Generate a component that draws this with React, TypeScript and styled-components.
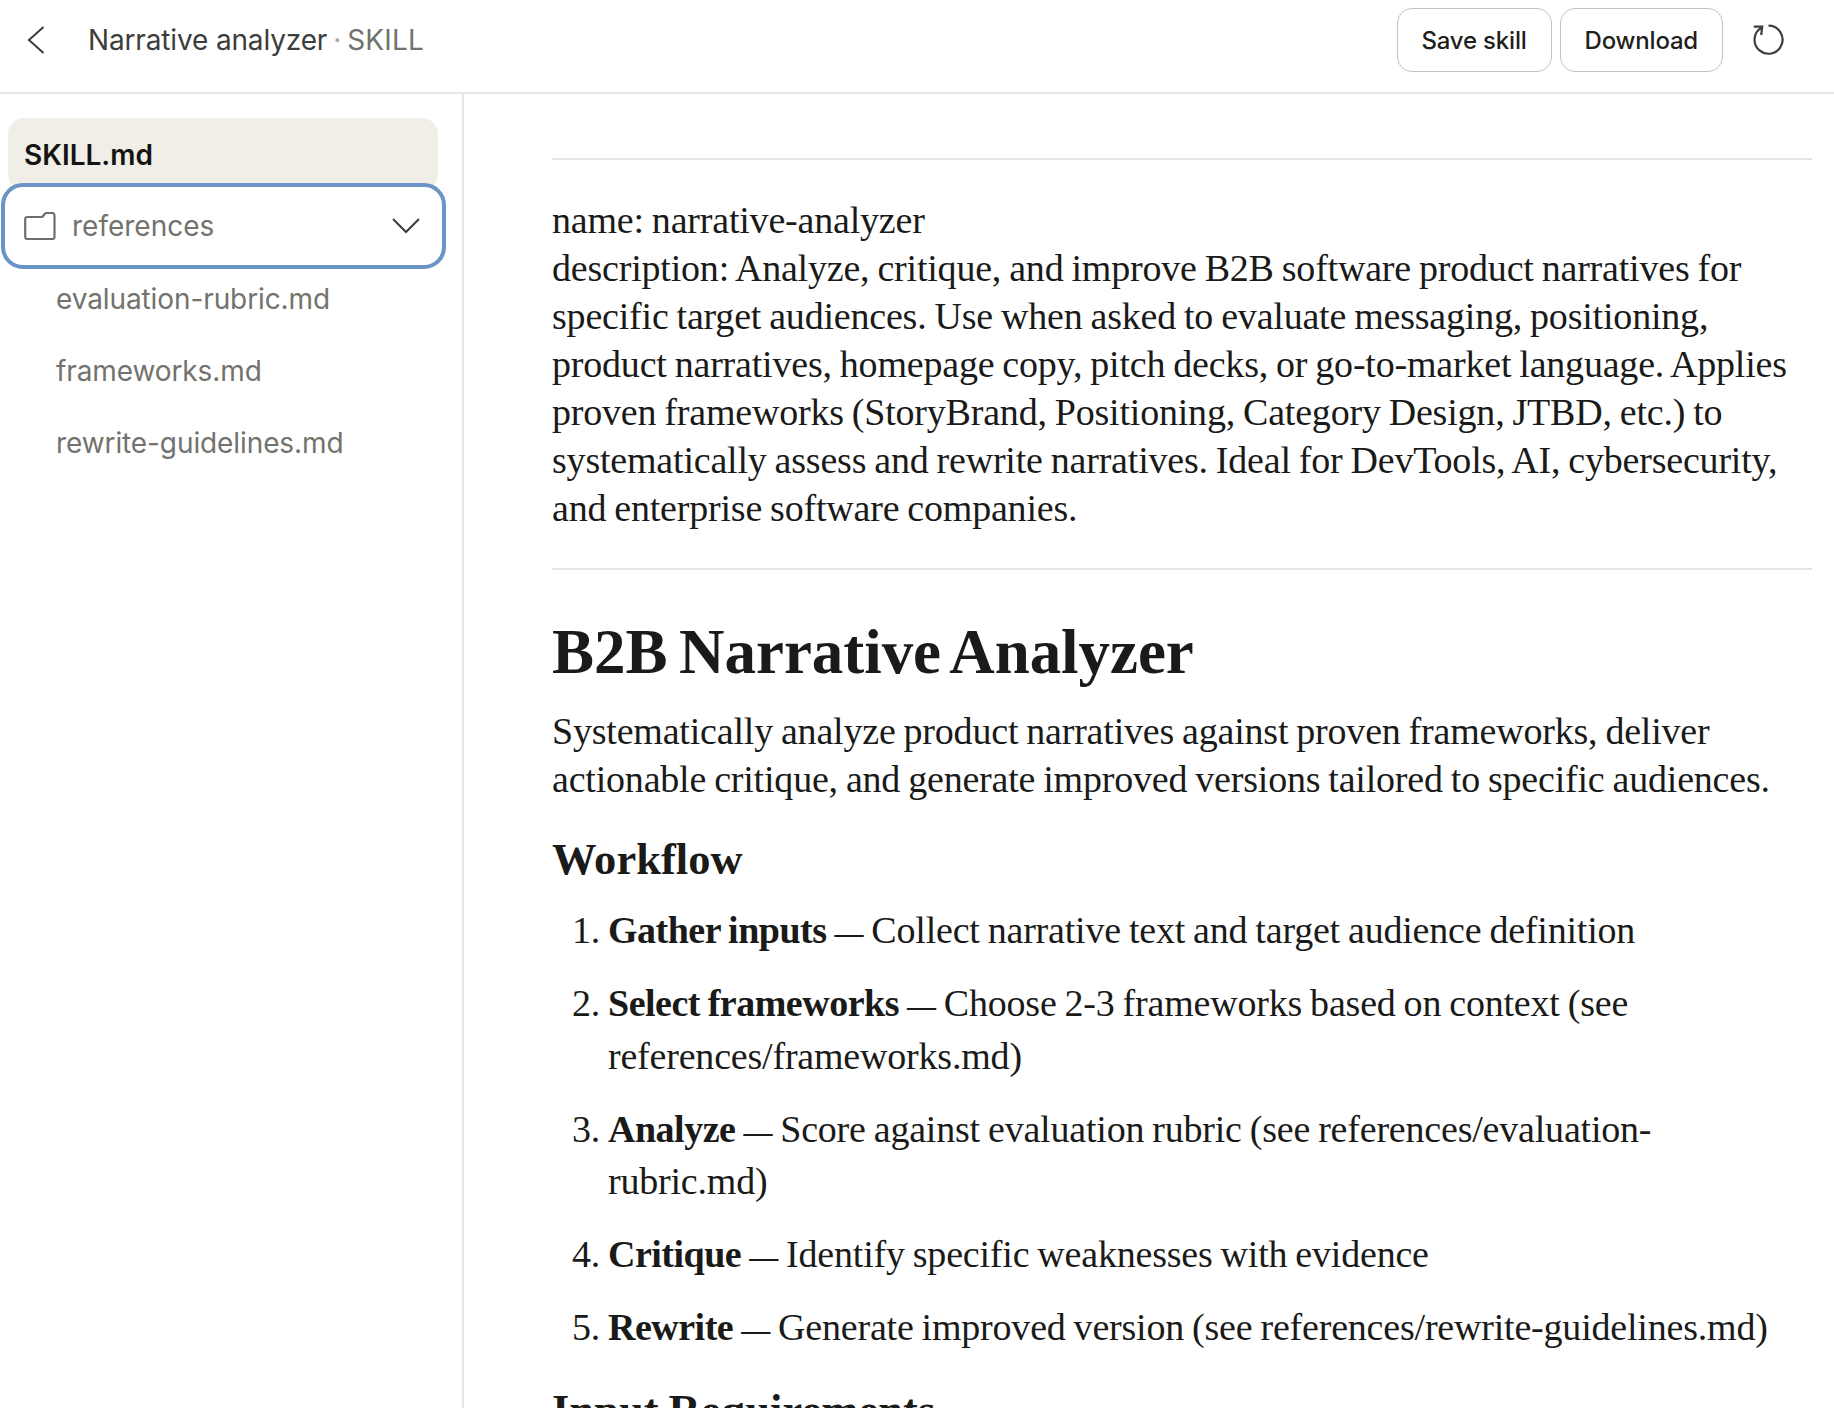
import React from "react";
import styled, { createGlobalStyle } from "styled-components";

const Global = createGlobalStyle`
  html, body { margin: 0; padding: 0; height: 1408px; overflow: hidden; background: #fff; }
  * { box-sizing: border-box; }
`;
const Page = styled.div`
  width: 1834px; height: 1408px; display: flex; flex-direction: column; overflow: hidden;
  font-family: Inter, "Liberation Sans", sans-serif; background: #fff;
`;
const Header = styled.header`
  height: 94px; flex: none; display: flex; align-items: center; padding: 0 49px 12px 26px;
  border-bottom: 2px solid #e5e5e3;
`;
const IconBack = styled.svg`width: 20px; height: 30px; flex: none; margin-right: 42px;`;
const Title = styled.div`font-size: 28px; color: #3d3d3a; letter-spacing: -0.15px; flex: 1;`;
const Dot = styled.span`color: #a8a8a3; margin: 0 6px;`;
const Muted = styled.span`color: #73726c; letter-spacing: 0.2px;`;
const HeaderButton = styled.button`
  height: 64px; border: 1px solid #c4c4c0; border-radius: 15px; background: #fff; color: #1f1f1d;
  font: 500 24px Inter, sans-serif; padding: 0 24px; margin-right: 8px; letter-spacing: -0.2px;
`;
const Reload = styled.svg`width: 32px; height: 32px; margin-left: 22px; flex: none;`;
const Body = styled.div`flex: 1; display: flex; min-height: 0;`;
const Sidebar = styled.aside`
  width: 464px; flex: none; border-right: 2px solid #e5e5e3; padding: 24px 0 0 8px;
`;
const ActiveFile = styled.div`
  width: 430px; height: 72px; border-radius: 16px; background: #f0eee7; color: #141413;
  font-size: 28px; font-weight: 600; padding: 20px 16px 0;
`;
const Folder = styled.div`
  position: relative; z-index: 1; margin: -7px 0 -6px -7px; width: 445px; height: 86px;
  border: 4px solid #6a94c6; border-radius: 22px; background: #fff; display: flex; align-items: center;
  padding: 0 22px 0 19px; color: #73726c; font-size: 28px;
`;
const FolderIcon = styled.svg`width: 32px; height: 28px; margin-right: 16px; flex: none;`;
const FolderLabel = styled.span`flex: 1;`;
const Chevron = styled.svg`width: 28px; height: 16px; flex: none;`;
const FileItem = styled.div`
  height: 72px; display: flex; align-items: center; padding-left: 48px; color: #73726c; font-size: 28px;
  letter-spacing: -0.1px;
`;
const Main = styled.main`
  flex: 1; padding: 64px 22px 0 88px; color: #1a1a19;
  font-family: "Liberation Serif", serif; font-size: 38px; line-height: 48px; min-width: 0;
  word-spacing: -1.3px; letter-spacing: -0.2px;
`;
const Rule = styled.hr`border: 0; border-top: 2px solid #e5e5e3; margin: 0;`;
const Para = styled.p<{ $pad?: string }>`margin: 0; padding: ${p => p.$pad || "0"};`;
const H1 = styled.h1`font-size: 63px; line-height: 72px; font-weight: 700; margin: 46px 0 19px; letter-spacing: -0.05px; word-spacing: -4px;`;
const H2 = styled.h2`font-size: 44.5px; line-height: 52px; font-weight: 700; margin: 30px 0 19px; letter-spacing: 0.05px;`;
const List = styled.ol`margin: 0; padding: 0 24px 0 56px;`;
const Item = styled.li`margin: 0 0 20.5px; line-height: 52.5px;`;
const Strong = styled.strong`letter-spacing: -0.5px;`;
const Dash = styled.span`font-size: 29px; font-weight: 700; line-height: 0;`;

const items: [string, string][] = [
  ["Gather inputs", "Collect narrative text and target audience definition"],
  ["Select frameworks", "Choose 2-3 frameworks based on context (see references/frameworks.md)"],
  ["Analyze", "Score against evaluation rubric (see references/evaluation-rubric.md)"],
  ["Critique", "Identify specific weaknesses with evidence"],
  ["Rewrite", "Generate improved version (see references/rewrite-guidelines.md)"],
];

export default function App() {
  return (
    <Page>
      <Global />
      <Header>
        <IconBack viewBox="0 0 20 30" fill="none" stroke="#3d3d3a" strokeWidth="2"><path d="M17.5 2 3 15l14.5 13" /></IconBack>
        <Title>Narrative analyzer<Dot>·</Dot><Muted>SKILL</Muted></Title>
        <HeaderButton>Save skill</HeaderButton>
        <HeaderButton>Download</HeaderButton>
        <Reload viewBox="0 0 32 32" fill="none" stroke="#3d3d3a" strokeWidth="2.2"><path d="M15.5 1.700A14 14 0 1 1 8.500 3.600M.8 2.700h8.400l-1 8.300" /></Reload>
      </Header>
      <Body>
        <Sidebar>
          <ActiveFile>SKILL.md</ActiveFile>
          <Folder>
            <FolderIcon viewBox="0 0 32 28" fill="none" stroke="#6f6f6a" strokeWidth="2.2"><path d="M1.200 7a2 2 0 0 1 2-2h14.300c.6 0 1-.3 1.400-.8l2-2.400c.4-.5.8-.8 1.400-.8H28a2.500 2.500 0 0 1 2.500 2.500V25a2 2 0 0 1-2 2H3.200a2 2 0 0 1-2-2Z" /></FolderIcon>
            <FolderLabel>references</FolderLabel>
            <Chevron viewBox="0 0 28 16" fill="none" stroke="#3d3d3a" strokeWidth="2"><path d="m1 1 13 13L27 1" /></Chevron>
          </Folder>
          <FileItem>evaluation-rubric.md</FileItem>
          <FileItem>frameworks.md</FileItem>
          <FileItem>rewrite-guidelines.md</FileItem>
        </Sidebar>
        <Main>
          <Rule />
          <Para $pad="36px 0 36px">name: narrative-analyzer<br />description: Analyze, critique, and improve B2B software product narratives for specific target audiences. Use when asked to evaluate messaging, positioning, product narratives, homepage copy, pitch decks, or go-to-market language. Applies proven frameworks (StoryBrand, Positioning, Category Design, JTBD, etc.) to systematically assess and rewrite narratives. Ideal for DevTools, AI, cybersecurity, and enterprise software companies.</Para>
          <Rule />
          <H1>B2B Narrative Analyzer</H1>
          <Para>Systematically analyze product narratives against proven frameworks, deliver actionable critique, and generate improved versions tailored to specific audiences.</Para>
          <H2>Workflow</H2>
          <List>
            {items.map(([b, t]) => <Item key={b}><Strong>{b}</Strong> <Dash>—</Dash> {t}</Item>)}
          </List>
          <H2>Input Requirements</H2>
        </Main>
      </Body>
    </Page>
  );
}
